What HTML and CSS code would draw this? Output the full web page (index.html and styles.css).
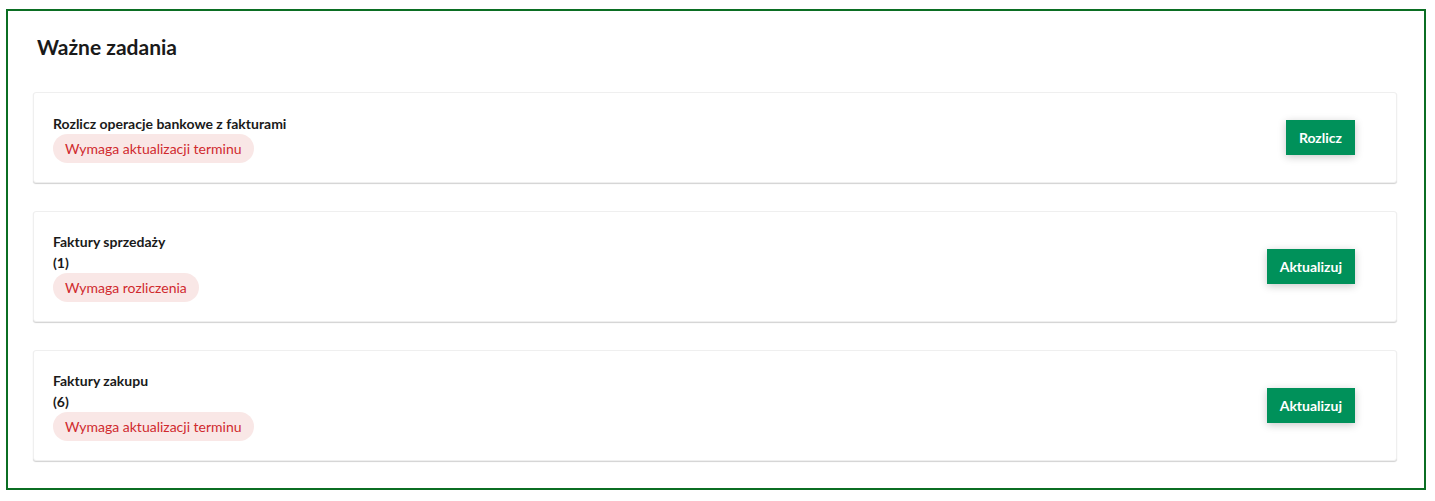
FILE: index.html
```html
<!DOCTYPE html>
<html lang="pl">
<head>
<meta charset="utf-8">
<link rel="stylesheet" href="styles.css">
</head>
<body>
<section class="panel">
  <h2 class="panel-title">Ważne zadania</h2>
  <div class="tasks">
    <div class="task">
      <div class="task-info">
        <div class="task-name">Rozlicz operacje bankowe z fakturami</div>
        <span class="chip">Wymaga aktualizacji terminu</span>
      </div>
      <button class="btn">Rozlicz</button>
    </div>
    <div class="task">
      <div class="task-info">
        <div class="task-name">Faktury sprzedaży</div>
        <div class="task-name">(1)</div>
        <span class="chip">Wymaga rozliczenia</span>
      </div>
      <button class="btn">Aktualizuj</button>
    </div>
    <div class="task">
      <div class="task-info">
        <div class="task-name">Faktury zakupu</div>
        <div class="task-name">(6)</div>
        <span class="chip">Wymaga aktualizacji terminu</span>
      </div>
      <button class="btn">Aktualizuj</button>
    </div>
  </div>
</section>
</body>
</html>
```

FILE: styles.css
```css
* { box-sizing: border-box; }
html, body { margin: 0; padding: 0; background: #fff; }
body {
  padding: 9px 9px 11px 6px;
  font-family: Lato, "Noto Sans", sans-serif;
  color: #1a1a1a;
}
.panel {
  width: 1420px;
  height: 481px;
  border: 2px solid #0b6e23;
  padding: 23px 27px 0 25px;
}
.panel-title {
  margin: 0 0 32px 4px;
  font-size: 21px;
  font-weight: 700;
  line-height: 26px;
  color: #1a1a1a;
}
.tasks {
  display: flex;
  flex-direction: column;
  gap: 28px;
}
.task {
  display: flex;
  align-items: center;
  justify-content: space-between;
  min-height: 91px;
  padding: 19px 41px 19px 19px;
  border: 1px solid #efefef;
  border-radius: 3px;
  box-shadow: 0 1px 1px rgba(0,0,0,0.18);
  background: #fff;
}
.task-info {
  display: flex;
  flex-direction: column;
  align-items: flex-start;
}
.task-name {
  font-size: 14px;
  font-weight: 700;
  line-height: 21px;
  color: #1a1a1a;
}
.chip {
  display: inline-block;
  height: 29px;
  line-height: 29px;
  padding: 0 12px;
  border-radius: 15px;
  background: #f9e7e6;
  color: #d02a2e;
  font-size: 14px;
}
.btn {
  height: 35px;
  padding: 0 13px;
  border: none;
  border-radius: 0;
  background: #00915a;
  color: #fff;
  font-family: inherit;
  font-size: 14px;
  font-weight: 700;
  box-shadow: 0 2px 8px rgba(0,0,0,0.22);
}
```
